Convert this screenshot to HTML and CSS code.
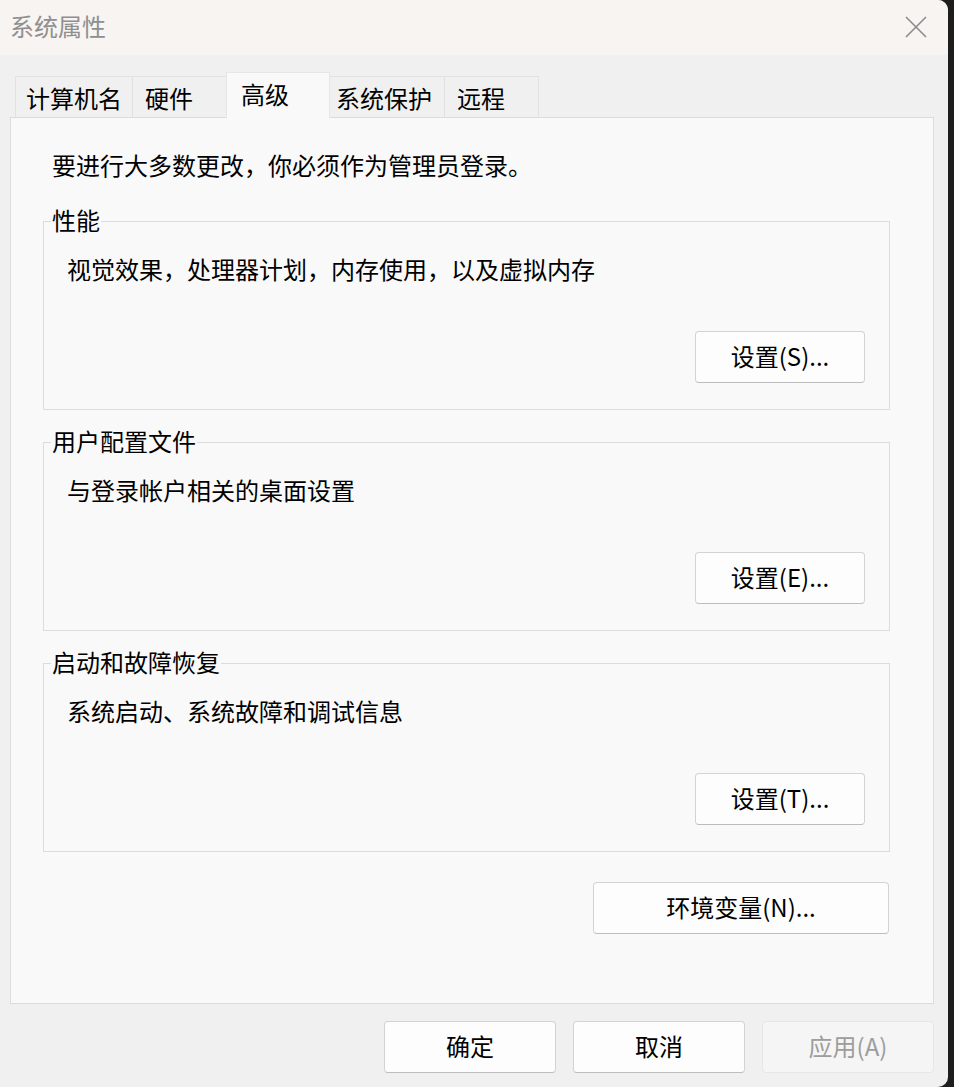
FILE: index.html
```html
<!DOCTYPE html>
<html lang="zh-CN">
<head>
<meta charset="utf-8">
<title>系统属性</title>
<link rel="stylesheet" href="styles.css">
</head>
<body>
<div class="window">
  <div class="titlebar">
    <div class="title">系统属性</div>
    <div class="close">
      <svg width="24" height="24" viewBox="0 0 24 24"><path d="M2 2 L22 22 M22 2 L2 22" stroke="#8c8c8c" stroke-width="1.6" fill="none"/></svg>
    </div>
  </div>
  <div class="content">
    <div class="tabs">
      <div class="tab t1">计算机名</div>
      <div class="tab t2">硬件</div>
      <div class="tab active t3">高级</div>
      <div class="tab t4">系统保护</div>
      <div class="tab t5">远程</div>
    </div>
    <div class="panel">
      <div class="intro">要进行大多数更改，你必须作为管理员登录。</div>
      <div class="group">
        <div class="legend">性能</div>
        <div class="desc">视觉效果，处理器计划，内存使用，以及虚拟内存</div>
        <div class="btn setbtn">设置(S)...</div>
      </div>
      <div class="group">
        <div class="legend">用户配置文件</div>
        <div class="desc">与登录帐户相关的桌面设置</div>
        <div class="btn setbtn">设置(E)...</div>
      </div>
      <div class="group">
        <div class="legend">启动和故障恢复</div>
        <div class="desc">系统启动、系统故障和调试信息</div>
        <div class="btn setbtn">设置(T)...</div>
      </div>
      <div class="btn envbtn">环境变量(N)...</div>
    </div>
    <div class="footer">
      <div class="btn fbtn">确定</div>
      <div class="btn fbtn">取消</div>
      <div class="btn fbtn disabled">应用(A)</div>
    </div>
  </div>
</div>
</body>
</html>
```
FILE: styles.css
```css
* { box-sizing: border-box; }
html, body { margin: 0; padding: 0; }
body {
  background: #1e1e1e;
  width: 954px;
  height: 1087px;
  overflow: hidden;
  font-family: "Noto Sans CJK SC", "Noto Sans", sans-serif;
  font-size: 24px;
  color: #000;
}
.window {
  width: 948px;
  height: 1087px;
  background: #f0f0f0;
  border-radius: 0 10px 10px 0;
  overflow: hidden;
}
.titlebar {
  height: 55px;
  background: #f7f4f1;
  display: flex;
  align-items: center;
  justify-content: space-between;
  padding: 0 20px 0 10px;
}
.title {
  color: #8f8f8f;
  line-height: 32px;
  margin-top: -4px;
}
.close {
  width: 24px;
  height: 24px;
  margin-top: -2px;
}
.close svg { display: block; }
.content {
  padding: 0 14px 0 10px;
}
.tabs {
  height: 62px;
  display: flex;
  align-items: flex-end;
  padding-left: 5px;
}
.tab {
  height: 41px;
  border: 1px solid #e2e2e2;
  border-bottom: none;
  margin-right: -1px;
  background: #f0f0f0;
  line-height: 32px;
  padding-top: 5px;
  white-space: nowrap;
}
.tab.active {
  height: 46px;
  margin-bottom: -1px;
  background: #f9f9f9;
  position: relative;
  z-index: 1;
  border-color: #e6e6e6;
}
.t1 { width: 118px; padding-left: 10px; }
.t2 { width: 95px; padding-left: 12px; }
.t3 { width: 104px; padding-left: 14px; }
.t4 { width: 116px; padding-left: 6px; }
.t5 { width: 95px; padding-left: 12px; }
.panel {
  height: 887px;
  background: #f9f9f9;
  border: 1px solid #dcdcdc;
  padding: 31px 43px 0 32px;
  display: flex;
  flex-direction: column;
}
.intro {
  line-height: 32px;
  margin-left: 9px;
  margin-bottom: 2px;
}
.group {
  margin-top: 38px;
  border: 1px solid #dcdcdc;
  padding: 0 24px 26px 23px;
  display: flex;
  flex-direction: column;
}
.group + .group { margin-top: 32px; }
.legend {
  align-self: flex-start;
  margin: -17px 0 0 -16px;
  padding: 0 1px;
  line-height: 30px;
  background: #f9f9f9;
}
.desc {
  margin-top: 18px;
  line-height: 32px;
}
.btn {
  height: 52px;
  border: 1px solid #d3d3d3;
  border-bottom-color: #bdbdbd;
  border-radius: 4px;
  background: #fdfdfd;
  display: flex;
  align-items: center;
  justify-content: center;
  line-height: 32px;
  padding-bottom: 2px;
}
.setbtn {
  align-self: flex-end;
  width: 170px;
  margin-top: 46px;
}
.envbtn {
  align-self: flex-end;
  width: 296px;
  margin-top: 30px;
  margin-right: 1px;
}
.footer {
  display: flex;
  justify-content: flex-end;
  gap: 17px;
  margin-top: 17px;
}
.fbtn {
  width: 172px;
}
.fbtn.disabled {
  background: #f5f5f5;
  border-color: #e6e6e6;
  color: #9d9d9d;
}
```
